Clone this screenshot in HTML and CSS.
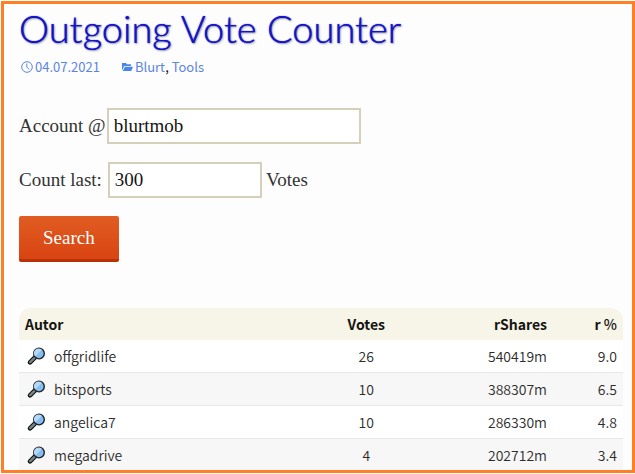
FILE: index.html
```
<!DOCTYPE html>
<html lang="en">
<head>
    <meta charset="UTF-8">
    <meta name="viewport" content="width=device-width, initial-scale=1.0">
    <title>Outgoing Vote Counter</title>
    <link rel="stylesheet" href="styles.css">
</head>
<body>
    <svg class="sprite" width="0" height="0">
        <symbol id="lens" viewBox="0 0 20 20">
            <path d="M9.5 10.8L4 16.3" stroke="#111" stroke-width="4.6" stroke-linecap="round"/>
            <path d="M8.8 11.6L4.2 16.1" stroke="#74868a" stroke-width="2.4" stroke-linecap="round"/>
            <circle cx="13" cy="7.6" r="5.3" fill="#85bdf0" stroke="#222" stroke-width="1.4"/>
            <path d="M9.3 10.6a4.6 4.6 0 0 1 6.6-6.8z" fill="#b4d9f8"/>
        </symbol>
    </svg>
    <main class="page">
        <h1>Outgoing Vote Counter</h1>
        <div class="meta">
            <a href="#" class="date">
                <svg width="12" height="12" viewBox="0 0 12 12" fill="none" stroke="currentColor">
                    <circle cx="6" cy="6" r="5.3"/>
                    <path d="M5.8 2.5V6l2.4 2.4"/>
                </svg>
                04.07.2021
            </a>
            <span class="tags">
                <svg width="11" height="10" viewBox="0 0 11 10" fill="currentColor">
                    <path d="M0 8.5V1h4l1 1.3h4V4H2.2z"/>
                    <path d="M2.8 4.8H11L9.3 9H.8z"/>
                </svg>
                <span><a href="#">Blurt</a>, <a href="#">Tools</a></span>
            </span>
        </div>
        <form>
            <div class="field">
                <label for="account">Account @</label><input type="text" id="account" class="account" value="blurtmob">
            </div>
            <div class="field">
                <label for="count">Count last:</label>
                <input type="text" id="count" class="count" value="300">
                <span>Votes</span>
            </div>
            <button type="submit">Search</button>
        </form>
        <table>
            <thead>
                <tr>
                    <th class="author">Autor</th>
                    <th class="votes">Votes</th>
                    <th class="shares">rShares</th>
                    <th class="percent">r <span class="unit">%</span></th>
                </tr>
            </thead>
            <tbody>
                <tr>
                    <td class="author"><svg class="lens"><use href="#lens"/></svg>offgridlife</td>
                    <td class="votes">26</td>
                    <td class="shares">540419m</td>
                    <td class="percent">9.0</td>
                </tr>
                <tr>
                    <td class="author"><svg class="lens"><use href="#lens"/></svg>bitsports</td>
                    <td class="votes">10</td>
                    <td class="shares">388307m</td>
                    <td class="percent">6.5</td>
                </tr>
                <tr>
                    <td class="author"><svg class="lens"><use href="#lens"/></svg>angelica7</td>
                    <td class="votes">10</td>
                    <td class="shares">286330m</td>
                    <td class="percent">4.8</td>
                </tr>
                <tr>
                    <td class="author"><svg class="lens"><use href="#lens"/></svg>megadrive</td>
                    <td class="votes">4</td>
                    <td class="shares">202712m</td>
                    <td class="percent">3.4</td>
                </tr>
            </tbody>
        </table>
    </main>
</body>
</html>
```

FILE: styles.css
```
* {
    box-sizing: border-box;
}
body {
    margin: 0;
    padding: 1px 0 0 1px;
    background: #fff;
    color: #141412;
    font-family: "Noto Sans CJK SC", "Open Sans", sans-serif;
    font-size: 14px;
}
.sprite {
    position: absolute;
}
.page {
    padding: 2px 9px 0 15px;
    background: #fdfdfd;
    border: 3px solid #ff7f27;
}
h1 {
    margin: 0;
    color: #1414c8;
    font-family: Lato, sans-serif;
    font-size: 38px;
    font-weight: 300;
    line-height: 44px;
    text-shadow: 0 0 1px #1414c8, 1px 1px 2px #999;
}
a {
    color: #5b84e0;
    text-decoration: none;
}
a:hover {
    text-decoration: underline;
}
.meta {
    display: flex;
    gap: 22px;
    padding: 7px 2px 5px;
    font-size: 13px;
    line-height: 20px;
}
.date, .tags {
    display: flex;
    align-items: center;
    gap: 2px;
}
.tags svg {
    color: #4a86e8;
}
form {
    padding-top: 26px;
    font-family: "Liberation Serif", serif;
    font-size: 19px;
}
.field {
    margin-bottom: 18px;
    line-height: 36px;
    color: #333;
}
input {
    height: 36px;
    margin-left: 1px;
    padding: 4px 5px;
    border: 2px solid #d4d0ba;
    background: #fff;
    color: #141412;
    font: inherit;
    vertical-align: top;
}
.account {
    width: 254px;
}
.count {
    width: 154px;
}
button {
    display: block;
    padding: 11px 24px 10px;
    border: none;
    border-bottom: 3px solid #b93207;
    border-radius: 2px;
    background: linear-gradient(#e05d22, #d94412);
    color: #fff;
    font: inherit;
    line-height: 22px;
    cursor: pointer;
}
button:hover {
    background: #e05d22;
}
table {
    width: 100%;
    margin-top: 46px;
    border-collapse: separate;
    border-spacing: 0;
    table-layout: fixed;
    line-height: 20px;
}
th, td {
    padding: 6px;
}
th {
    background: #f7f5e7;
    font-weight: 700;
}
th:first-child {
    border-top-left-radius: 12px;
}
th:last-child {
    border-top-right-radius: 12px;
}
.unit {
    font-weight: 500;
}
td {
    background: #fff;
    border-bottom: 1px solid #e8e8e8;
    color: #2c2c2a;
    font-weight: 350;
}
tr:nth-child(even) td {
    background: #f7f7f7;
}
tr:last-child td {
    padding-bottom: 5px;
    border-bottom: none;
}
.author {
    width: 45%;
    text-align: left;
}
.votes {
    width: 25%;
    text-align: center;
}
.shares {
    text-align: right;
}
.percent {
    width: 70px;
    text-align: right;
}
.lens {
    width: 20px;
    height: 20px;
    margin: 0 8px 0 1px;
    vertical-align: top;
}
```
